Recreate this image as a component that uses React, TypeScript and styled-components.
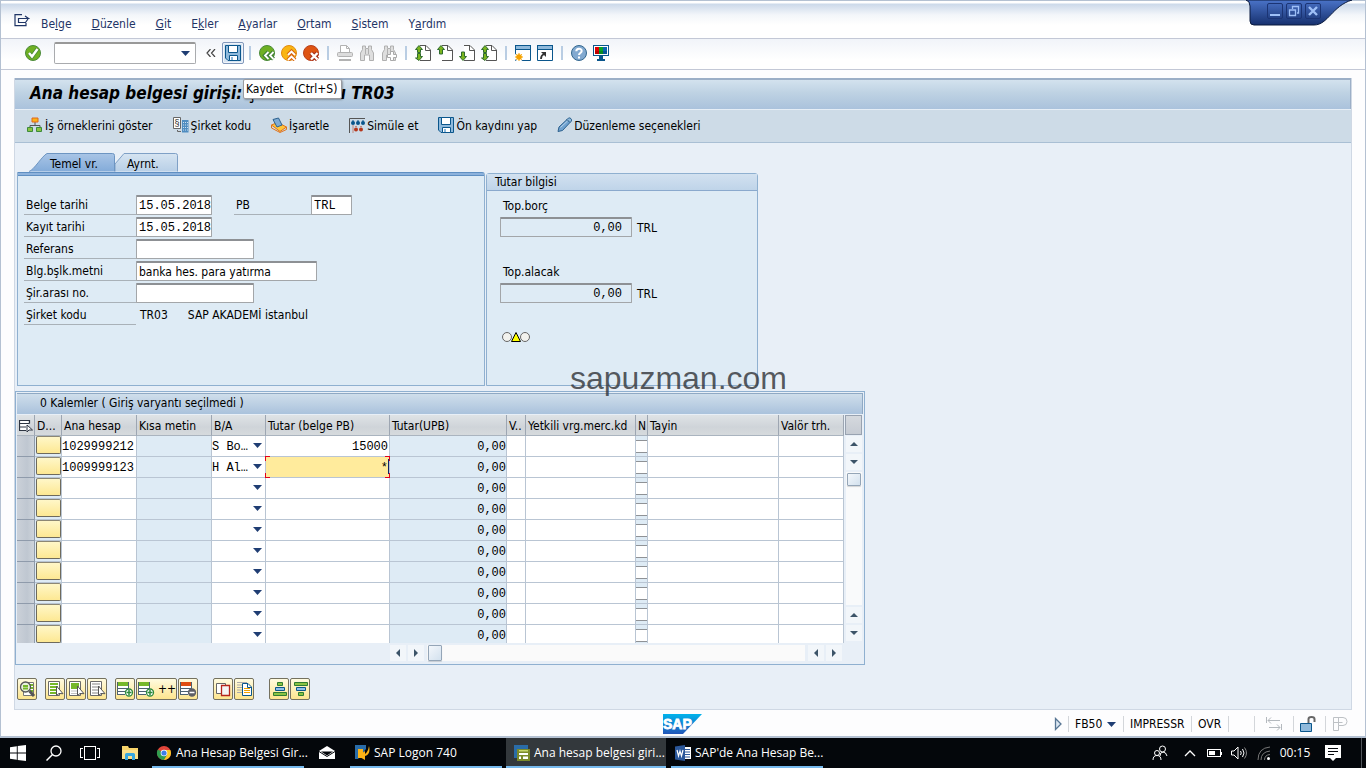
import React from "react";
import styled, { createGlobalStyle, css } from "styled-components";

const UI = '"DejaVu Sans Condensed", "Noto Sans", sans-serif';
const MONO = '"Liberation Mono", monospace';

const Global = createGlobalStyle`
  * { box-sizing: border-box; }
  body { margin: 0; background: #fdfdfe; font-family: ${UI}; font-size: 12px; line-height: 16px; color: #000; }
  button, input, select { font: inherit; color: inherit; margin: 0; padding: 0; border: 0; background: none; border-radius: 0; outline: 0; }
  button { display: inline-flex; align-items: center; cursor: default; white-space: nowrap; }
  svg { display: block; flex: none; }
  h1, h2, p { margin: 0; font-size: inherit; font-weight: inherit; }
`;

/* ---------- window frame ---------- */
const Page = styled.div`
  position: relative;
  display: flex;
  flex-direction: column;
  min-height: 100vh;
  overflow: hidden;
`;
const Window = styled.div`
  flex: 1;
  display: flex;
  flex-direction: column;
  border: solid #b4c1d2;
  border-width: 1px 1px 2px 1px;
`;
const MenuBar = styled.nav`
  display: flex;
  align-items: center;
  gap: 20px;
  height: 38px;
  padding: 8px 13px 0;
  border-bottom: 1px solid #c3c8d6;
  background: linear-gradient(#fff 0 2px, #ccd9ea 3px, #f3f6fa 14px, #fff 24px);
`;
const MenuItem = styled.button`
  color: #1f3566;
  line-height: 16px;
`;
const MenuIcon = styled.button`
  margin-right: -9px;
  height: 20px;
  align-items: flex-start;
`;
const ToolBar = styled.div`
  display: flex;
  align-items: center;
  height: 31px;
  padding: 0 0 2px 21px;
  border-bottom: 1px solid #c3c8d6;
  background: linear-gradient(#f1f4f9, #fff 70%);
`;
const ToolButton = styled.button<{ $active?: boolean }>`
  width: 22px;
  height: 22px;
  justify-content: center;
  border: 1px solid transparent;
  ${(p) => p.$active && css`
    border-color: #8298bb;
    border-radius: 2px;
    background: #d7e4f2;
    box-shadow: inset 0 0 0 1px #f0f5fa;
  `}
`;
const ToolSep = styled.span`
  width: 2px;
  height: 14px;
  margin: 0 5px;
  background: #b9cde3;
`;
const Command = styled.div`
  position: relative;
  width: 142px;
  height: 22px;
  margin: 0 4px 0 10px;
  input {
    width: 100%;
    height: 100%;
    padding: 0 20px 0 4px;
    border: 1px solid #a9abae;
    border-top: 2px solid #999;
    border-radius: 2px;
    background: #fff;
  }
  button { position: absolute; right: 6px; top: 9px; }
`;
const TipAnchor = styled.span`
  position: relative;
  display: flex;
`;
const Tooltip = styled.span`
  position: absolute;
  z-index: 3;
  left: 21px;
  top: 37px;
  min-width: 99px;
  height: 20px;
  padding: 0 2px;
  border: 1px solid #9a9ca0;
  border-radius: 2px;
  background: #fff;
  box-shadow: 1px 1px 2px rgba(0, 0, 0, 0.3);
  line-height: 18px;
  white-space: pre;
`;
const WindowControls = styled.div`
  position: absolute;
  right: 14px;
  top: 0;
  width: 106px;
  height: 28px;
  > svg { position: absolute; inset: 0; }
`;
const ControlRow = styled.div`
  position: relative;
  display: flex;
  gap: 3px;
  padding: 3px 0 0 21px;
`;
const ControlButton = styled.button`
  width: 16px;
  height: 16px;
  justify-content: center;
  border: 1px solid #1b3474;
  border-radius: 2px;
`;

/* ---------- transaction screen ---------- */
const Screen = styled.main`
  flex: 1;
  display: flex;
  flex-direction: column;
  margin: 8px 13px 0;
  border: 1px solid #cfd8e4;
  border-top: 0;
  background: #e8eff7;
`;
const TitleBar = styled.h1`
  height: 31px;
  padding: 0 15px;
  border-top: 2px solid #9cafc7;
  border-right: 1px solid #9cafc7;
  background: linear-gradient(#d3e2ee, #bed2e3 45%, #aac2dc);
  font: italic bold 17px/26px ${UI};
  white-space: pre;
`;
const AppBar = styled.div`
  display: flex;
  align-items: center;
  gap: 20px;
  height: 34px;
  padding: 0 12px;
  border-top: 1px solid #e6eef6;
  border-bottom: 1px solid #a9bfd4;
  background: #cddbe7;
`;
const AppButton = styled.button`
  gap: 2px;
  svg { margin-bottom: 2px; }
`;
const Body = styled.div`
  flex: 1;
  display: flex;
  flex-direction: column;
  padding: 10px 0 9px;
`;
const Panels = styled.div`
  display: flex;
  align-items: flex-end;
  gap: 1px;
  padding: 0 2px;
`;
const HeaderPanel = styled.section`
  width: 468px;
`;
const Tabs = styled.div`
  display: flex;
  height: 19px;
  padding-left: 12px;
`;
const Tab = styled.button<{ $width: number; $indent: number }>`
  position: relative;
  width: ${(p) => p.$width}px;
  padding: 2px 0 0 ${(p) => p.$indent}px;
  svg { position: absolute; left: 0; top: 0; }
  span { position: relative; }
`;
const TabBody = styled.div`
  height: 214px;
  padding: 19px 6px;
  border: 1px solid #8fb0d0;
  border-top: 1px solid #5f8fc2;
  border-top-right-radius: 3px;
  background: linear-gradient(#8db2dc 2px, #5f8fc2 2px 3px, #deebf5 3px);
`;
const FieldRow = styled.div`
  display: flex;
  height: 20px;
  margin-bottom: 2px;
  &:first-child { margin-top: 3px; }
`;
const Label = styled.label<{ $width: number; $gap?: number }>`
  width: ${(p) => p.$width}px;
  margin-left: ${(p) => p.$gap ?? 0}px;
  padding: 3px 2px 0;
  border-bottom: 1px solid #a9b1b8;
  line-height: 15px;
  white-space: nowrap;
`;
const Field = styled.input<{ $width: number; $mono?: boolean }>`
  width: ${(p) => p.$width}px;
  height: 20px;
  padding: 0 0 0 2px;
  border: 1px solid #a3a6a9;
  border-top: 2px solid #8d9094;
  border-radius: 1px;
  background: #fff;
  ${(p) => p.$mono && css`font-family: ${MONO};`}
`;
const ReadOnlyText = styled.span`
  padding: 3px 0 0 4px;
  margin-right: 16px;
  line-height: 15px;
`;
const Group = styled.section`
  width: 272px;
  height: 213px;
  border: 1px solid #8fb0d0;
  border-radius: 3px 3px 0 0;
  background: #deebf5;
`;
const GroupTitle = styled.h2`
  height: 17px;
  padding-left: 8px;
  border-bottom: 1px solid #8aa9cd;
  background: linear-gradient(#d2e1f0, #bfd4e9);
  line-height: 16px;
`;
const GroupBody = styled.div`
  padding: 6px 13px 0;
`;
const TotalLabel = styled.label`
  display: block;
  height: 20px;
  padding: 1px 3px 0;
`;
const TotalRow = styled.div`
  display: flex;
  gap: 5px;
  height: 20px;
  margin-bottom: 26px;
  line-height: 22px;
`;
const TotalInput = styled.input`
  width: 132px;
  padding-right: 9px;
  border: 1px solid #a3a6a9;
  border-top: 2px solid #8d9094;
  border-radius: 1px;
  font-family: ${MONO};
  text-align: right;
`;
const Lights = styled.div`
  margin: 0 0 0 1px;
`;
const Watermark = styled.div`
  position: absolute;
  left: 570px;
  top: 360px;
  font: 32px/36px "Liberation Sans", sans-serif;
  color: rgba(45, 48, 52, 0.78);
  pointer-events: none;
`;

/* ---------- line items ---------- */
const ItemsBox = styled.section`
  width: 850px;
  margin-top: 5px;
  padding: 1px;
  border: 1px solid #8fb0d0;
`;
const ItemsTitle = styled.h2`
  height: 21px;
  margin-bottom: 1px;
  padding: 0 23px;
  border-top: 1px solid #8fa9c4;
  border-right: 1px solid #8fa9c4;
  background: linear-gradient(#cfdeeb, #aac2dc);
  line-height: 18px;
  white-space: pre;
`;
const ItemsArea = styled.div`
  display: flex;
  gap: 1px;
`;
const Grid = styled.table`
  width: 827px;
  table-layout: fixed;
  border-collapse: separate;
  border-spacing: 0;
`;
const HeadCell = styled.th`
  height: 21px;
  padding: 1px 0 0 2px;
  overflow: hidden;
  border-right: 1px solid #9da6b2;
  border-bottom: 1px solid #aab4bf;
  background: linear-gradient(#dfe3e6, #cfd4d9 60%, #d6dadd);
  font-weight: normal;
  text-align: left;
  white-space: nowrap;
`;
const Cell = styled.td<{ $shade?: boolean; $right?: boolean; $current?: boolean; $bare?: boolean }>`
  position: relative;
  height: 21px;
  padding: ${(p) => (p.$bare ? 0 : "4px 0 0")};
  vertical-align: top;
  border-right: 1px solid #b9c5d3;
  border-bottom: 1px solid #b9c5d3;
  background: ${(p) => (p.$current ? "#ffeb9c" : p.$shade ? "#deebf5" : "#fff")};
  z-index: ${(p) => (p.$current ? 1 : 0)};
  font-family: ${MONO};
  text-align: ${(p) => (p.$right ? "right" : "left")};
  line-height: 14px;
`;
const HandleCell = styled(Cell)`
  border-right-color: #8f9bab;
  border-bottom-color: #8f9bab;
  background: linear-gradient(90deg, #cbd1d9, #bfc7d1 60%, #ced4db);
`;
const Row = styled.tr`
  height: 21px;
  &:last-child { height: 18px; }
  &:last-child ${Cell} { height: 18px; border-bottom: 0; }
`;
const CellInput = styled.input`
  display: block;
  width: 100%;
  height: 14px;
  text-align: inherit;
  padding: 0 1px 0 0;
`;
const CellSelect = styled.select`
  display: block;
  width: 40px;
  height: 14px;
  appearance: none;
`;
const DropMark = styled.span`
  position: absolute;
  right: 3px;
  top: 7px;
  pointer-events: none;
`;
const Focus = styled.span`
  position: absolute;
  inset: -2px;
  pointer-events: none;
`;
const RowHandle = styled.button`
  display: block;
  width: 17px;
  height: 18px;
`;
const StatusKey = styled.button`
  display: block;
  width: 25px;
  height: 18px;
  margin-left: 1px;
  border: 1px solid #6e6a5c;
  border-top-color: #8c8774;
  border-radius: 2px;
  background: linear-gradient(#fff7c8, #fde893);
`;
const Tick = styled.input`
  display: block;
  appearance: none;
  width: 11px;
  height: 13px;
  border: 1px solid #8f9296;
  border-width: 1px 0;
  background: #fff;
`;
const VScroll = styled.div`
  display: flex;
  flex-direction: column;
  align-items: center;
  width: 17px;
`;
const Corner = styled.button`
  width: 17px;
  height: 20px;
  margin-bottom: 1px;
  border: 1px solid #98a2b0;
  background: linear-gradient(#d5d9de, #c6cbd3);
`;
const ScrollButton = styled.button<{ $vertical?: boolean }>`
  width: 16px;
  height: 16px;
  margin-bottom: ${(p) => (p.$vertical ? 2 : 0)}px;
  justify-content: center;
  background: #f2f6fa;
`;
const VTrack = styled.div`
  flex: 1;
  width: 16px;
  margin-bottom: 2px;
  padding-top: 1px;
  background: #f9fafb;
`;
const Thumb = styled.div<{ $h: number }>`
  width: 14px;
  height: ${(p) => p.$h}px;
  margin: 0 1px;
  border: 1px solid #94a5b7;
  border-radius: 1px;
  background: linear-gradient(135deg, #f3f7fb, #d3e1ee);
  box-shadow: 0 1px 1px rgba(0, 0, 0, 0.15);
`;
const HScroll = styled.div`
  display: flex;
  align-items: center;
  gap: 2px;
  height: 20px;
  margin: 0 21px 0 373px;
`;
const HTrack = styled.div`
  flex: 1;
  height: 16px;
  margin: 0 1px;
  background: #fafafa;
`;

/* ---------- item buttons ---------- */
const ItemTools = styled.div`
  display: flex;
  gap: 8px;
  margin: 13px 2px 0;
`;
const ToolGroup = styled.div<{ $wide?: boolean }>`
  display: flex;
  gap: 1px;
  margin-left: ${(p) => (p.$wide ? 7 : 0)}px;
`;
const YellowButton = styled.button<{ $width?: number }>`
  width: ${(p) => p.$width ?? 20}px;
  height: 22px;
  padding-left: 1px;
  gap: 3px;
  border: 1px solid #74715f;
  border-radius: 2px;
  background: linear-gradient(#fffbe0, #fde58e);
`;

/* ---------- status bar ---------- */
const StatusBar = styled.footer`
  position: relative;
  display: flex;
  align-items: center;
  justify-content: flex-end;
  height: 26px;
  padding: 2px 18px 0 0;
  > svg { position: absolute; left: 662px; top: 4px; }
`;
const StatusItem = styled.button<{ $width: number }>`
  width: ${(p) => p.$width}px;
  height: 16px;
  padding-left: 6px;
  gap: 5px;
  border-left: 1px solid #d3d6da;
`;

/* ---------- taskbar ---------- */
const TaskBar = styled.div`
  display: flex;
  justify-content: space-between;
  height: 30px;
  background: #04070b;
  color: #fff;
  font-family: "Open Sans", sans-serif;
  font-size: 12px;
`;
const TaskSide = styled.div`
  display: flex;
  align-items: center;
`;
const TaskIcon = styled.button<{ $width: number }>`
  width: ${(p) => p.$width}px;
  height: 30px;
  justify-content: center;
`;
const TaskApp = styled.button<{ $width: number; $active?: boolean; $gap?: number }>`
  width: ${(p) => p.$width}px;
  height: 30px;
  margin-right: ${(p) => p.$gap ?? 0}px;
  padding: 2px 0 0 ${(p) => (p.$active ? 8 : 4)}px;
  gap: 4px;
  border-bottom: 2px solid #76b9ed;
  background: ${(p) => (p.$active ? "#33383c" : "transparent")};
`;
const Clock = styled.time`
  width: 40px;
  text-align: center;
  white-space: nowrap;
`;
const DesktopEdge = styled.button`
  width: 5px;
  height: 30px;
  margin-left: 10px;
  border-left: 1px solid #50555a;
`;

/* ---------- icons ---------- */
const I: React.FC<{ w?: number; h?: number; crisp?: boolean; children: React.ReactNode }> = ({ w = 16, h = 16, crisp, children }) => (
  <svg width={w} height={h} viewBox={`0 0 ${w} ${h}`} fill="none" shapeRendering={crisp ? "crispEdges" : undefined} aria-hidden="true">
    {children}
  </svg>
);
const Down = ({ color = "#1f3d73" }: { color?: string }) => (
  <I w={9} h={5}><path d="M0 0h9L4.500 5z" fill={color} /></I>
);
const Arrow = ({ dir }: { dir: "up" | "down" | "left" | "right" }) => {
  const d = { up: "M0 6l4-4 4 4z", down: "M0 2h8L4 6z", left: "M6 0v8L2 4z", right: "M2 0v8l4-4z" }[dir];
  return <I w={8} h={8}><path d={d} fill="#3c5468" /></I>;
};
const FloppyShape = () => (
  <>
    <path d="M.5.500h15v15H3l-2.500-2.500z" fill="#8fb9db" stroke="#0a568c" />
    <path d="M3.500.500h9v7h-9z" fill="#fff" stroke="#0a568c" />
    <path d="M4.500 10.500h8v5h-8z" fill="#fff" stroke="#0a568c" />
    <path d="M6 12h2v3H6z" fill="#8fb9db" />
  </>
);
const PageArrows = ({ up, down }: { up?: boolean; down?: boolean }) => (
  <I>
    <path d="M5 .5h6l4.500 4.500v10.500H5" fill="#fff" stroke="#555" />
    <path d="M10.500 .5v5h5" stroke="#555" />
    {up && <path d={`M4 .500l3.500 4h-2V${down ? 7.5 : 9}h-3V4.500h-2z`} fill="#7ab51d" stroke="#2f6b2f" />}
    {down && <path d={`M4 15.500l3.500-4h-2V${up ? 8.5 : 7}h-3v4.500h-2z`} fill="#7ab51d" stroke="#2f6b2f" />}
  </I>
);
const Binoc = ({ next }: { next?: boolean }) => (
  <I>
    <path d="M3.500 1h3v2.500h3V1h3v3.500L14.500 8v7.500h-4V10h-5v5.500h-4V8l2-3.500z" fill="#dedede" stroke="#b0b0b0" />
    <path d="M6.500 4v5M9.500 4v5" stroke="#b0b0b0" />
    {next && <path d="M9.500 6.500h3v3h3v3h-3v3h-3v-3h-3v-3h3z" fill="#fff" stroke="#a9a9a9" />}
  </I>
);
const Lines = ({ color }: { color: string }) => (
  <>
    {[3, 6, 9, 12].map((y) => (
      <path key={y} d={`M3 ${y}h8v2H3z`} fill={color} />
    ))}
  </>
);
const SelectIcon = ({ mode }: { mode: "all" | "block" | "none" }) => (
  <I w={17} h={18}>
    <path d="M1.500 1.500h11v14h-11z" fill="#fff" stroke="#6a6a6a" />
    {mode === "block" ? <path d="M3 3h8v6H3z" fill="#76b82a" /> : <Lines color={mode === "all" ? "#76b82a" : "#c2c2c2"} />}
    {mode === "block" && <path d="M3 11h8M3 13.500h8" stroke="#c2c2c2" />}
    <path d="M9.500 6v9.500l2.500-2 4 .2z" fill="#fff" stroke="#555" />
  </I>
);
const RowIcon = ({ color, sign }: { color: string; sign: "+" | "-" }) => (
  <I w={17} h={18}>
    <path d="M.5 2h11v13H.5z" fill="#fff" />
    <path d="M0 2h12v4H0z" fill={color} />
    <path d="M0 8.500h12M0 11.500h8M0 14.500h8M.5 2v13M11.500 2v7" stroke="#4d6272" />
    <circle cx="12" cy="12.500" r="3.500" fill={sign === "+" ? "#fff" : "#5d5f66"} stroke={sign === "+" ? "#2e8a3c" : "#5d5f66"} strokeWidth="1.300" />
    <path d={sign === "+" ? "M9.500 12.500h5M12 10v5" : "M9.500 12.500h5"} stroke={sign === "+" ? "#2e8a3c" : "#fff"} strokeWidth="1.500" />
  </I>
);

const menus: [string, string, string][] = [
  ["Be", "l", "ge"], ["", "D", "üzenle"], ["", "G", "it"], ["E", "k", "ler"],
  ["", "A", "yarlar"], ["", "O", "rtam"], ["", "S", "istem"], ["Y", "a", "rdım"],
];

const rows = [
  { account: "1029999212", side: "S Bo…", amount: "15000" },
  { account: "1009999123", side: "H Al…", amount: "*" },
  ...Array.from({ length: 8 }, () => ({ account: "", side: "", amount: "" })),
];

const columns: [string, number][] = [
  ["", 18], ["D...", 27], ["Ana hesap", 75], ["Kısa metin", 75], ["B/A", 54], ["Tutar (belge PB)", 124],
  ["Tutar(UPB)", 117], ["V..", 19], ["Yetkili vrg.merc.kd", 110], ["N", 12], ["Tayin", 131], ["Valör trh.", 65],
];

const StandardTools = () => (
  <ToolBar>
    <ToolButton aria-label="Onayla">
      <I>
        <circle cx="8" cy="8" r="7.500" fill="#6fb023" stroke="#4b8a3a" />
        <path d="M4 8l3 3.500L12.500 4" stroke="#4b8a3a" strokeWidth="4" />
        <path d="M4 8l3 3.500L12.500 4" stroke="#fff" strokeWidth="2.400" />
      </I>
    </ToolButton>
    <Command>
      <input aria-label="Komut alanı" />
      <button aria-label="Komut geçmişi"><Down /></button>
    </Command>
    <ToolButton aria-label="Komut alanını gizle">
      <I w={10} h={8}><path d="M4.500 0L1 4l3.500 4M9 0L5.500 4 9 8" stroke="#444" strokeWidth="1.200" /></I>
    </ToolButton>
    <TipAnchor>
      <ToolButton $active aria-label="Kaydet"><I><FloppyShape /></I></ToolButton>
      <Tooltip role="tooltip">{"Kaydet   (Ctrl+S)"}</Tooltip>
    </TipAnchor>
    <ToolSep />
    <ToolButton aria-label="Geri">
      <I>
        <circle cx="8" cy="8" r="7.500" fill="#6fb023" stroke="#4b8a3a" />
        <path d="M9.500 7L6 10.500 9.500 14M14.500 7L11 10.500l3.500 3.500" stroke="#3d7d35" strokeWidth="4" />
        <path d="M9.500 7L6 10.500 9.500 14M14.500 7L11 10.500l3.500 3.500" stroke="#fff" strokeWidth="1.800" />
      </I>
    </ToolButton>
    <ToolButton aria-label="Çıkış">
      <I>
        <circle cx="8" cy="8" r="7.500" fill="#f9b513" stroke="#e28a10" />
        <path d="M7 10L10.500 6.500 14 10M7 15l3.500-3.500L14 15" stroke="#d9680f" strokeWidth="4" />
        <path d="M7 10L10.500 6.500 14 10M7 15l3.500-3.500L14 15" stroke="#fff" strokeWidth="1.800" />
      </I>
    </ToolButton>
    <ToolButton aria-label="İptal">
      <I>
        <circle cx="8" cy="8" r="7.500" fill="#de5412" stroke="#b8401c" />
        <path d="M8 8l6.500 6.500M14.500 8L8 14.500" stroke="#a8321c" strokeWidth="4.500" />
        <path d="M8 8l6.500 6.500M14.500 8L8 14.500" stroke="#fff" strokeWidth="2.400" />
      </I>
    </ToolButton>
    <ToolSep />
    <ToolButton aria-label="Yazdır">
      <I>
        <path d="M3.500 7V.5h6l3 3V7" fill="#fff" stroke="#b2b2b2" />
        <path d="M9.500 .5v3h3" stroke="#b2b2b2" />
        <rect x=".5" y="7.500" width="15" height="4" rx="1" fill="#dcdcdc" stroke="#b2b2b2" />
        <path d="M2 15h12" stroke="#b2b2b2" strokeWidth="2" />
      </I>
    </ToolButton>
    <ToolButton aria-label="Bul"><Binoc /></ToolButton>
    <ToolButton aria-label="Sonrakini bul"><Binoc next /></ToolButton>
    <ToolSep />
    <ToolButton aria-label="İlk sayfa"><PageArrows up down /></ToolButton>
    <ToolButton aria-label="Önceki sayfa"><PageArrows up /></ToolButton>
    <ToolButton aria-label="Sonraki sayfa"><PageArrows down /></ToolButton>
    <ToolButton aria-label="Son sayfa"><PageArrows up down /></ToolButton>
    <ToolSep />
    <ToolButton aria-label="Yeni pencere">
      <I>
        <path d="M.5.500h15v15H.5z" fill="#fff" stroke="#0a568c" />
        <path d="M0 0h16v5H0z" fill="#0a568c" /><path d="M1 1h14v3H1z" fill="#8fb9db" />
        <circle cx="4" cy="12" r="4.500" fill="#fff" />
        <circle cx="4" cy="12" r="2.800" fill="#f5a200" />
        <path d="M4 8v8M0 12h8M1.200 9.200l5.600 5.600M6.800 9.200l-5.600 5.600" stroke="#f5a200" />
      </I>
    </ToolButton>
    <ToolButton aria-label="Kısayol oluştur">
      <I>
        <path d="M.5.500h15v15H.5z" fill="#fff" stroke="#0a568c" />
        <path d="M0 0h16v5H0z" fill="#0a568c" /><path d="M1 1h14v3H1z" fill="#8fb9db" />
        <path d="M4 14c0-3 .5-4 3-5" stroke="#333" strokeWidth="1.800" /><path d="M4 7h5v5z" fill="#333" />
      </I>
    </ToolButton>
    <ToolSep />
    <ToolButton aria-label="Yardım">
      <I>
        <circle cx="8" cy="8" r="7.500" fill="#82a9d0" stroke="#33678f" />
        <path d="M5.300 6.300C5.300 2.800 10.700 3 10.700 6c0 2-2.700 2-2.700 4" stroke="#fff" strokeWidth="2" />
        <path d="M7 11.500h2v2H7z" fill="#fff" />
      </I>
    </ToolButton>
    <ToolButton aria-label="Yerel yerleşimi uyarla">
      <I crisp>
        <path d="M0 0h16v11H0z" fill="#0a568c" /><path d="M1 1h14v9H1z" fill="#fff" />
        <path d="M2 2h4v7H2z" fill="#e00000" /><path d="M6 2h4v7H6z" fill="#0aa32a" /><path d="M10 2h4v7h-4z" fill="#0a66b0" />
        <path d="M2 6h12v3H2z" fill="#000" opacity=".15" />
        <path d="M6 11h4v3H6zM4 14h8v2H4z" fill="#0a568c" />
      </I>
    </ToolButton>
  </ToolBar>
);

const ApplicationTools = () => (
  <AppBar>
    <AppButton>
      <I><path d="M8 5v4M3 11V8.500h10V11" stroke="#555" /><path d="M5 1h6v4H5z" fill="#fbb216" stroke="#e0671a" /><path d="M.5 10.500h5v4h-5zM9.500 10.500h5v4h-5z" fill="#8ac343" stroke="#3c8b3b" /></I>
      İş örneklerini göster
    </AppButton>
    <AppButton>
      <I>
        <path d="M9 3h6.500v12.500H9z" fill="#4f8cc0" /><path d="M10.500 5v10M12.500 5v10M14.500 5v10" stroke="#cfe0ef" strokeDasharray="1 1.500" />
        <path d="M.5.500h7v11h-7z" fill="#fff" stroke="#666" />
        <text x="4" y="9" fontSize="9" fontFamily="Liberation Sans" textAnchor="middle" fill="#222">§</text>
        <path d="M4.500 13v1.500H8" stroke="#666" />
      </I>
      Şirket kodu
    </AppButton>
    <AppButton>
      <I>
        <path d="M.5 8l6-2.500L15.500 10 9 14.500z" fill="#ffc53a" stroke="#e0731a" /><path d="M.5 8v3L9 15.500l6.500-3V10" stroke="#e0731a" />
        <path d="M2 2.500L7.500 1l3.500 7-5 2z" fill="#7facd4" stroke="#2d618e" />
      </I>
      İşaretle
    </AppButton>
    <AppButton>
      <I>
        <path d="M.5 16V1.500H16" stroke="#555" />
        {[4, 9, 14].map((x) => <circle key={x} cx={x} cy="6" r="2" fill="#0a568c" />)}
        <path d="M4 3v2M9 3v2M14 3v2" stroke="#0a568c" />
        {[7, 12].map((x) => <circle key={x} cx={x} cy="12.500" r="2" fill="#b5361b" />)}
        <path d="M4 8.500v7M7 9v2M12 9v2" stroke="#b5361b" strokeDasharray="1 1" />
      </I>
      Simüle et
    </AppButton>
    <AppButton><I><FloppyShape /></I>Ön kaydını yap</AppButton>
    <AppButton>
      <I w={15}>
        <path d="M1 14.500l1-4.500L10 2.500 13 5.500 5.500 13.500z" fill="#6ea1cf" stroke="#2d618e" /><path d="M10 2.500L11.500 1q1.500-.5 2.500.7t.5 2.300L13 5.500z" fill="#8fb9db" stroke="#2d618e" /><path d="M3.500 10.500L10.500 4" stroke="#b9d3ea" />
      </I>
      Düzenleme seçenekleri
    </AppButton>
  </AppBar>
);

const HeaderData = () => (
  <Panels>
    <HeaderPanel>
      <Tabs role="tablist">
        <Tab role="tab" aria-selected $width={86} $indent={21}>
          <svg width="86" height="19" viewBox="0 0 86 19">
            <defs><linearGradient id="tabOn" x2="0" y2="1"><stop stopColor="#a9c5e6" /><stop offset="1" stopColor="#83abd9" /></linearGradient></defs>
            <path d="M0 18.500C5 17 13 3 18 .5h65.500q2 0 2 2v16" fill="url(#tabOn)" stroke="#6d95c2" />
          </svg>
          <span>Temel vr.</span>
        </Tab>
        <Tab role="tab" aria-selected={false} $width={63} $indent={12}>
          <svg width="63" height="19" viewBox="0 0 63 19">
            <defs><linearGradient id="tabOff" x2="0" y2="1"><stop stopColor="#d6e4f1" /><stop offset="1" stopColor="#b8cfe7" /></linearGradient></defs>
            <path d="M0 18.500V11L9 .5h51.500q2 0 2 2v16" fill="url(#tabOff)" stroke="#7fa0c6" />
          </svg>
          <span>Ayrnt.</span>
        </Tab>
      </Tabs>
      <TabBody>
        <FieldRow>
          <Label htmlFor="docDate" $width={112}>Belge tarihi</Label>
          <Field id="docDate" $mono $width={76} defaultValue="15.05.2018" />
          <Label htmlFor="currency" $width={77} $gap={22}>PB</Label>
          <Field id="currency" $mono $width={41} defaultValue="TRL" />
        </FieldRow>
        <FieldRow>
          <Label htmlFor="postDate" $width={112}>Kayıt tarihi</Label>
          <Field id="postDate" $mono $width={76} defaultValue="15.05.2018" />
        </FieldRow>
        <FieldRow>
          <Label htmlFor="reference" $width={112}>Referans</Label>
          <Field id="reference" $width={118} />
        </FieldRow>
        <FieldRow>
          <Label htmlFor="headerText" $width={112}>Blg.bşlk.metni</Label>
          <Field id="headerText" $width={181} defaultValue="banka hes. para yatırma" />
        </FieldRow>
        <FieldRow>
          <Label htmlFor="crossNo" $width={112}>Şir.arası no.</Label>
          <Field id="crossNo" $width={118} />
        </FieldRow>
        <FieldRow>
          <Label as="span" $width={112}>Şirket kodu</Label>
          <ReadOnlyText>TR03</ReadOnlyText>
          <ReadOnlyText>SAP AKADEMİ istanbul</ReadOnlyText>
        </FieldRow>
      </TabBody>
    </HeaderPanel>
    <Group>
      <GroupTitle>Tutar bilgisi</GroupTitle>
      <GroupBody>
        <TotalLabel htmlFor="debit">Top.borç</TotalLabel>
        <TotalRow><TotalInput id="debit" readOnly value="0,00" />TRL</TotalRow>
        <TotalLabel htmlFor="credit">Top.alacak</TotalLabel>
        <TotalRow><TotalInput id="credit" readOnly value="0,00" />TRL</TotalRow>
        <Lights>
          <I w={30} h={16}>
            <circle cx="6" cy="8" r="4.500" fill="#f2f2ee" stroke="#666" /><circle cx="24" cy="8" r="4.500" fill="#f2f2ee" stroke="#666" />
            <path d="M15 3.500l4.500 9h-9z" fill="#ff0" stroke="#000" />
          </I>
        </Lights>
      </GroupBody>
    </Group>
  </Panels>
);

const LineItems = () => (
  <ItemsBox>
    <ItemsTitle>0 Kalemler ( Giriş varyantı seçilmedi )</ItemsTitle>
    <ItemsArea>
      <Grid>
        <colgroup>{columns.map(([name, w]) => <col key={name} width={w} />)}</colgroup>
        <thead>
          <tr>
            {columns.map(([name]) => (
              <HeadCell key={name} scope="col">
                {name || (
                  <I w={14} h={14}><path d="M.5 1.500h9v10h-9z" fill="#fff" /><path d="M10.500 4.500v-3H.5v10H7M.5 4.500h10M.5 8H7" stroke="#2d3542" strokeWidth="1.200" /><path d="M8 6v7l2-2h3.500z" fill="#fff" stroke="#2d3542" /></I>
                )}
              </HeadCell>
            ))}
          </tr>
        </thead>
        <tbody>
          {rows.map((r, i) => (
            <Row key={i}>
              <HandleCell $bare><RowHandle aria-label={`Satır ${i + 1}`} /></HandleCell>
              <Cell $shade $bare><StatusKey aria-label={`Durum ${i + 1}`} /></Cell>
              <Cell><CellInput aria-label="Ana hesap" defaultValue={r.account} /></Cell>
              <Cell $shade />
              <Cell>
                <CellSelect aria-label="B/A"><option>{r.side}</option></CellSelect>
                <DropMark><Down /></DropMark>
              </Cell>
              <Cell $right $current={i === 1}>
                <CellInput aria-label="Tutar" defaultValue={r.amount} />
                {i === 1 && (
                  <Focus>
                    <svg width="127" height="24" viewBox="0 0 127 24" fill="none" shapeRendering="crispEdges">
                      <path d="M1.500 6V1.500H6M121 1.500h4.500V6M125.500 18v4.500H121M6 22.500H1.500V18" stroke="#e3001b" />
                      <path d="M124.500 4v15" stroke="#10246a" />
                    </svg>
                  </Focus>
                )}
              </Cell>
              <Cell $shade $right>0,00</Cell>
              <Cell><CellInput aria-label="V" /></Cell>
              <Cell><CellInput aria-label="Yetkili" /></Cell>
              <Cell $shade><Tick type="checkbox" aria-label="N" /></Cell>
              <Cell><CellInput aria-label="Tayin" /></Cell>
              <Cell><CellInput aria-label="Valör trh." /></Cell>
            </Row>
          ))}
        </tbody>
      </Grid>
      <VScroll>
        <Corner aria-label="Tablo ayarları" />
        <ScrollButton $vertical aria-label="Yukarı"><Arrow dir="up" /></ScrollButton>
        <ScrollButton $vertical aria-label="Aşağı"><Arrow dir="down" /></ScrollButton>
        <VTrack><Thumb $h={13} /></VTrack>
        <ScrollButton $vertical aria-label="Sayfa yukarı"><Arrow dir="up" /></ScrollButton>
        <ScrollButton $vertical aria-label="Sayfa aşağı"><Arrow dir="down" /></ScrollButton>
      </VScroll>
    </ItemsArea>
    <HScroll>
      <ScrollButton aria-label="Sola"><Arrow dir="left" /></ScrollButton>
      <ScrollButton aria-label="Sağa"><Arrow dir="right" /></ScrollButton>
      <HTrack><Thumb $h={16} /></HTrack>
      <ScrollButton aria-label="Sayfa sola"><Arrow dir="left" /></ScrollButton>
      <ScrollButton aria-label="Sayfa sağa"><Arrow dir="right" /></ScrollButton>
    </HScroll>
  </ItemsBox>
);

const ItemButtons = () => (
  <ItemTools>
    <ToolGroup>
      <YellowButton aria-label="Ayrıntılar">
        <I w={17} h={18}>
          <path d="M4.500 2.500h10v13h-10z" fill="#fff" stroke="#777" /><path d="M11 5h3M11 8h3M11 11h3" stroke="#76b82a" strokeWidth="2" />
          <circle cx="6.500" cy="7" r="5" fill="#e9f2dc" stroke="#555" strokeWidth="1.300" /><path d="M4 6h5M4 8.500h5" stroke="#76b82a" strokeWidth="2" /><path d="M10.500 11L15 16" stroke="#555" strokeWidth="3" />
        </I>
      </YellowButton>
    </ToolGroup>
    <ToolGroup>
      <YellowButton aria-label="Tümünü seç"><SelectIcon mode="all" /></YellowButton>
      <YellowButton aria-label="Blok seç"><SelectIcon mode="block" /></YellowButton>
      <YellowButton aria-label="Seçimi kaldır"><SelectIcon mode="none" /></YellowButton>
    </ToolGroup>
    <ToolGroup>
      <YellowButton aria-label="Satır ekle"><RowIcon color="#76b82a" sign="+" /></YellowButton>
      <YellowButton $width={41}><RowIcon color="#76b82a" sign="+" />++</YellowButton>
      <YellowButton aria-label="Satır sil"><RowIcon color="#e04e12" sign="-" /></YellowButton>
    </ToolGroup>
    <ToolGroup $wide>
      <YellowButton aria-label="Kes">
        <I w={17} h={18}><path d="M1.500 3.500h9v10h-9z" fill="#fff" stroke="#666" /><path d="M6.500 5.500h8v10h-8z" fill="#f4f4f4" stroke="#b5241b" strokeWidth="1.300" /></I>
      </YellowButton>
      <YellowButton aria-label="Kopyala">
        <I w={17} h={18}><path d="M1 2.500h10M1 5h8M1 7.500h5M1 10h5M1 12.500h5" stroke="#aaa" /><path d="M6.500 3.500H12l3.500 3.500v8.500h-9z" fill="#fff" stroke="#0a568c" /><path d="M8 8.500h6M8 10.500h6M8 12.500h6" stroke="#f5a200" /><path d="M11.500 3.500v4h4" stroke="#0a568c" /></I>
      </YellowButton>
    </ToolGroup>
    <ToolGroup $wide>
      <YellowButton aria-label="Artan sırala">
        <I w={17} h={18}><path d="M6.500 2.500h5v3h-5z" fill="#8ac343" stroke="#2f7d32" /><path d="M4.500 7.500h9v3h-9z" fill="#8fc0ea" stroke="#0a568c" /><path d="M2.500 12.500h13v3h-13z" fill="#8ac343" stroke="#2f7d32" /></I>
      </YellowButton>
      <YellowButton aria-label="Azalan sırala">
        <I w={17} h={18}><path d="M2.500 2.500h13v3h-13z" fill="#8ac343" stroke="#2f7d32" /><path d="M4.500 7.500h9v3h-9z" fill="#8fc0ea" stroke="#0a568c" /><path d="M6.500 12.500h5v3h-5z" fill="#8ac343" stroke="#2f7d32" /></I>
      </YellowButton>
    </ToolGroup>
  </ItemTools>
);

const Status = () => (
  <StatusBar>
    <svg width="39" height="20" viewBox="0 0 39 20" role="img" aria-label="SAP">
      <defs><linearGradient id="sap" x2="0" y2="1"><stop stopColor="#00b4ec" /><stop offset="1" stopColor="#2255b8" /></linearGradient></defs>
      <path d="M0 0h39L20 20H0z" fill="url(#sap)" />
      <text x="0" y="15" fontFamily="Liberation Sans" fontWeight="bold" fontSize="14" fill="#fff" stroke="#fff" strokeWidth=".8">SAP</text>
    </svg>
    <button aria-label="İleti"><I w={14} h={14}><path d="M1.500 1.500L7 7l-5.500 5.500z" fill="#dbe7f2" stroke="#587694" strokeWidth="1.300" /></I></button>
    <StatusItem $width={55}>FB50 <Down /></StatusItem>
    <StatusItem $width={68}>IMPRESSR</StatusItem>
    <StatusItem $width={37}>OVR</StatusItem>
    <StatusItem $width={26} aria-label="Boş" />
    <StatusItem $width={39} aria-label="Yanıt">
      <I w={28}><path d="M5.500 1v6M7 4.500h12M7 4.500l3-3M7 4.500l3 3M20.500 8v6M19 11.500H8M19 11.500l-3-3M19 11.500l-3 3" stroke="#b4b9be" /></I>
    </StatusItem>
    <StatusItem $width={32} aria-label="Kilit">
      <I><path d="M8.500 7V3q0-2 3-2t3 2v3" stroke="#666" strokeWidth="2" /><path d="M.5 7.500h11v8H.5z" fill="#8fb9db" stroke="#0a568c" /></I>
    </StatusItem>
    <StatusItem $width={22} aria-label="Biçim">
      <I><path d="M1.500 1.500H11a4 4 0 010 8H6.500v5h-5zM6.500 1.500v8M1.500 6.500h9" stroke="#bdc1c5" /></I>
    </StatusItem>
  </StatusBar>
);

const Tasks = () => (
  <TaskBar>
    <TaskSide>
      <TaskIcon $width={36} aria-label="Başlat"><I><path d="M0 2.200L6.800 1.200v6.300H0zM7.700 1L16 0v7.500H7.700zM0 8.400h6.800v6.400L0 13.800zM7.700 8.400H16V16l-8.300-1.100z" fill="#fff" /></I></TaskIcon>
      <TaskIcon $width={36} aria-label="Ara"><I><circle cx="10" cy="6" r="5" stroke="#fff" strokeWidth="1.300" /><path d="M6.500 9.500L.5 15.500" stroke="#fff" strokeWidth="1.500" /></I></TaskIcon>
      <TaskIcon $width={36} aria-label="Görev görünümü"><I w={20} crisp><path d="M4.500 1.500h11v13h-11zM3 3.500H.5v9H3M17 3.500h2.500v9H17" stroke="#fff" /></I></TaskIcon>
      <TaskIcon $width={44} aria-label="Dosya Gezgini"><I><path d="M0 1h6l1 2h9v11H0z" fill="#f8d56b" /><path d="M0 5h16v9H0z" fill="#fbe08c" /><path d="M3 15V9.500q0-1.500 1.500-1.500h7Q13 8 13 9.500V15h-3v-4H6v4z" fill="#38a7e0" /></I></TaskIcon>
      <TaskApp $width={152}>
        <I>
          <circle cx="8" cy="8" r="7" fill="#e2453a" /><path d="M8 8L1.900 4.500A7 7 0 008 15l3-5z" fill="#2f9e4f" /><path d="M8 5h6.300A7 7 0 018 15l3-5z" fill="#f9c927" />
          <circle cx="8" cy="8" r="3.300" fill="#fff" /><circle cx="8" cy="8" r="2.600" fill="#3d7fe8" />
        </I>
        Ana Hesap Belgesi Gir...
      </TaskApp>
      <TaskIcon $width={46} aria-label="Posta"><I><path d="M0 6l8-5 8 5v8H0z" fill="#fff" /><path d="M2 6.500h12L8 10.500z" fill="#04070b" /><path d="M0 6.500l8 5 8-5" stroke="#04070b" /></I></TaskIcon>
      <TaskApp $width={152} $gap={4}>
        <I><path d="M1 0h11v4L4 14H1z" fill="#2a6ca8" /><path d="M15 1q2 8-4 10v4L4 11l7-5v3q3-2 4-8z" fill="#fbb216" /><path d="M4 4h5v9H4z" fill="#fbb216" /></I>
        SAP Logon 740
      </TaskApp>
      <TaskApp $width={160} $active $gap={5}>
        <I><path d="M0 0h14v4H4v9H0z" fill="#2a6ca8" /><path d="M3 4h13v12H3z" fill="#7b8a2a" /><path d="M5 8h9v2H5zM5 11.500h2V14H5zM9 11.500h5V14H9z" fill="#fff" /><path d="M5 5h9v1.500H5z" fill="#c7d66a" /></I>
        Ana hesap belgesi giri...
      </TaskApp>
      <TaskApp $width={152}>
        <I><path d="M8 2h8v12H8z" fill="#fff" /><path d="M10 4.500h5M10 7h5M10 9.500h5M10 12h5" stroke="#2b579a" /><path d="M0 1.500L10 0v16L0 14.500z" fill="#2b579a" /><path d="M2 5l1.500 6L5 6l1.500 5L8 5" stroke="#fff" strokeWidth="1.200" /></I>
        SAP'de Ana Hesap Be...
      </TaskApp>
    </TaskSide>
    <TaskSide>
      <TaskIcon $width={30} aria-label="Kişiler"><I><circle cx="10.500" cy="4" r="3" stroke="#fff" /><path d="M8 11q0-4 3-4t4 4" stroke="#fff" /><circle cx="5" cy="8" r="2.500" stroke="#fff" /><path d="M1 15q0-4.500 4-4.500T9 15" stroke="#fff" /></I></TaskIcon>
      <TaskIcon $width={30} aria-label="Gizli simgeler"><I w={12} h={8}><path d="M1 7l5-5 5 5" stroke="#fff" strokeWidth="1.300" /></I></TaskIcon>
      <TaskIcon $width={20} aria-label="Pil"><I h={10} crisp><path d="M.5 1.500h13v7H.5zM14.500 3.500v3" stroke="#fff" /><path d="M2 3h6v4H2z" fill="#fff" /></I></TaskIcon>
      <TaskIcon $width={28} aria-label="Ses"><I><path d="M.5 6H3l4-4v12l-4-4H.5z" stroke="#fff" /><path d="M9.500 6q1.500 2 0 4M11.500 4q3 4 0 8" stroke="#fff" /><path d="M13.500 2.500q4 5.500 0 11" stroke="#888" /></I></TaskIcon>
      <TaskIcon $width={22} aria-label="Ağ"><I><path d="M2 15Q2 3 14 2M5 15q0-8 9-9M8.500 15q0-5 5.500-5.500" stroke="#777" /><circle cx="12.500" cy="13.500" r="1.500" fill="#fff" /></I></TaskIcon>
      <Clock>00:15</Clock>
      <TaskIcon $width={36} aria-label="Bildirimler"><I><path d="M0 0h16v13h-5l-3 3-3-3H0z" fill="#fff" /><path d="M3 3.500h10M3 6.500h10M3 9.500h6" stroke="#04070b" /></I></TaskIcon>
      <DesktopEdge aria-label="Masaüstünü göster" />
    </TaskSide>
  </TaskBar>
);

export default function App() {
  return (
    <Page>
      <Global />
      <Window>
        <MenuBar>
          <MenuIcon aria-label="Sistem menüsü">
            <I h={14}><path d="M8 .7H1v11h11V9M5 4.500h9.500L11 2M4.500 4v4.500h7L14 5" stroke="#1f3566" strokeWidth="1.200" /></I>
          </MenuIcon>
          {menus.map(([a, key, b]) => <MenuItem key={a + key + b}>{a}<u>{key}</u>{b}</MenuItem>)}
        </MenuBar>
        <StandardTools />
        <Screen>
          <TitleBar>Ana hesap belgesi girişi: Şirket kodu TR03</TitleBar>
          <ApplicationTools />
          <Body>
            <HeaderData />
            <LineItems />
            <ItemButtons />
          </Body>
        </Screen>
        <Status />
      </Window>
      <Tasks />
      <WindowControls>
        <svg width="106" height="28" viewBox="0 0 106 28">
          <defs><linearGradient id="win" x2="0" y2="1"><stop stopColor="#4a73c8" /><stop offset="1" stopColor="#16306e" /></linearGradient></defs>
          <path d="M0 0q4 1 4 6v15q0 4 4 4h60C82 25 86 6 106 0z" fill="url(#win)" stroke="#0a1a3e" />
        </svg>
        <ControlRow>
          <ControlButton aria-label="Simge durumuna küçült"><I w={12} h={12}><path d="M1 10h10" stroke="#9fc0f7" strokeWidth="2" /></I></ControlButton>
          <ControlButton aria-label="Geri yükle"><I w={12} h={12}><path d="M1.500 5h6v5.500h-6zM4.500 4V1.500h6V8H9" stroke="#9fc0f7" strokeWidth="1.300" /></I></ControlButton>
          <ControlButton aria-label="Kapat"><I w={12} h={12}><path d="M2 2l8 8M10 2l-8 8" stroke="#9fc0f7" strokeWidth="2.400" /></I></ControlButton>
        </ControlRow>
      </WindowControls>
      <Watermark>sapuzman.com</Watermark>
    </Page>
  );
}
